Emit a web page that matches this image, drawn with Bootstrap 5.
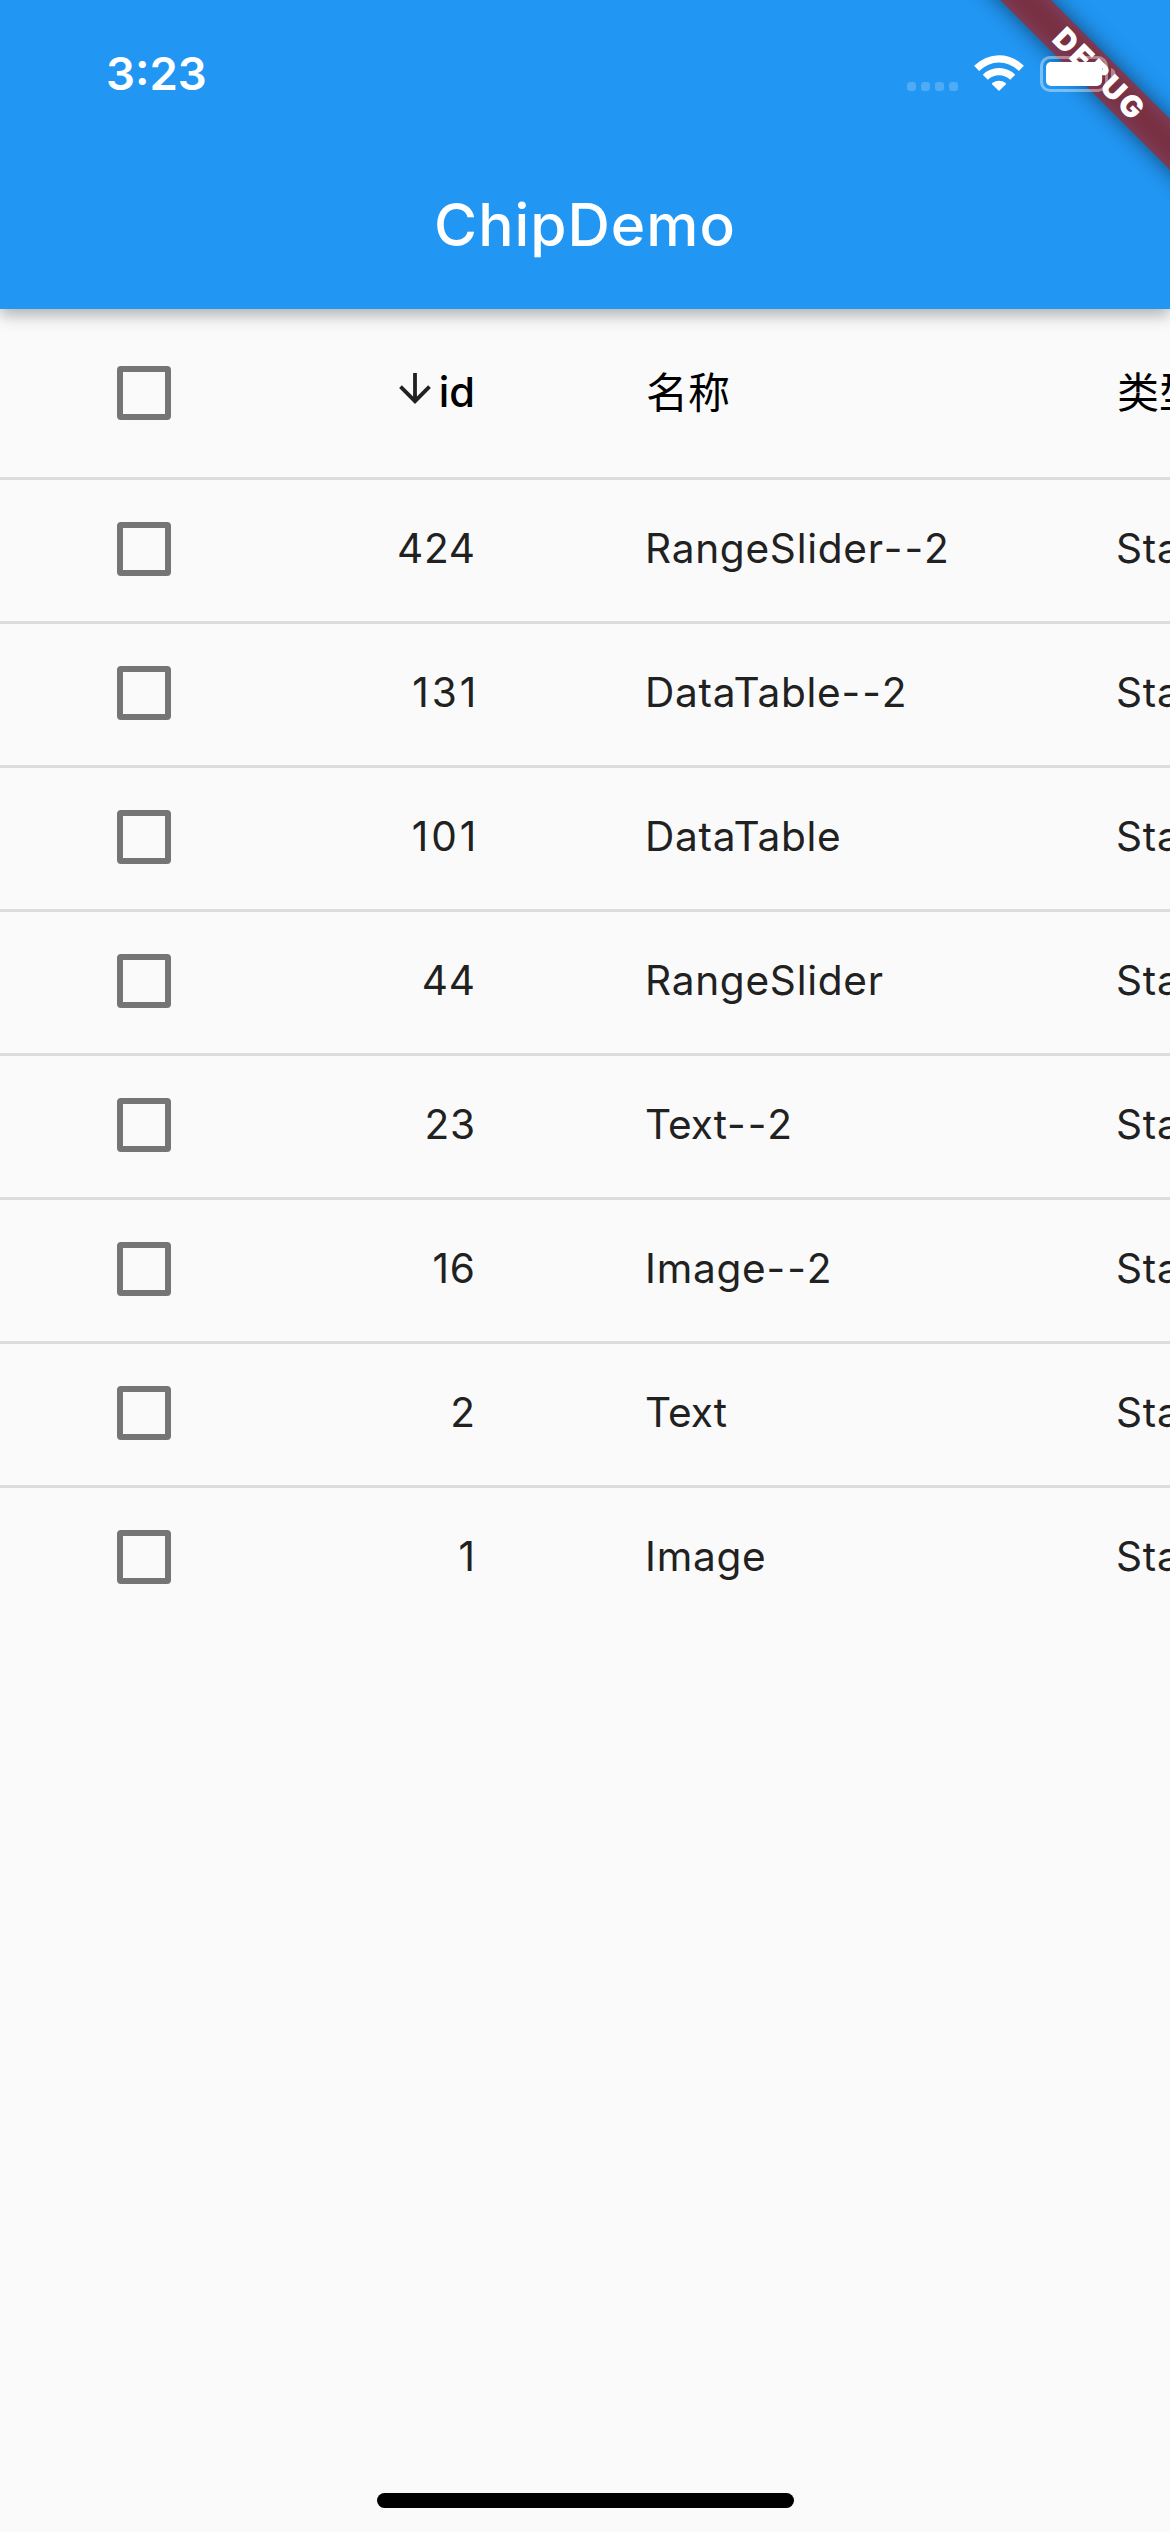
<!DOCTYPE html>
<html lang="zh-CN">
<head>
<meta charset="utf-8">
<meta name="viewport" content="width=device-width, initial-scale=1">
<title>ChipDemo</title>
<link href="https://cdn.jsdelivr.net/npm/bootstrap@5.3.0/dist/css/bootstrap.min.css" rel="stylesheet">
<style>
  body { background: #fafafa; font-family: Inter, "Noto Sans CJK SC", sans-serif; height: 2532px; overflow: hidden; color: #212121; }
  .app-top { background: #2196f3; height: 309px; box-shadow: 0 6px 15px rgba(0,0,0,.3); z-index: 2; }
  .status { height: 141px; padding: 0 54px 0 106px; }
  .clock { font-size: 45.5px; font-weight: 600; line-height: 60px; padding-top: 44px; }
  .status-icons { padding-top: 54px; height: 94px; z-index: 2; }
  .app-title { height: 168px; font-size: 58.7px; font-weight: 500; line-height: 168px; letter-spacing: 1px; }
  .ribbon { width: 230px; height: 230px; z-index: 1; }
  .ribbon text { font: 900 29.9px Inter, sans-serif; letter-spacing: 2.6px; }
  .data-grid { width: 1500px; table-layout: fixed; font-size: 40.6px; line-height: 60px; letter-spacing: .73px; }
  .data-grid td, .data-grid th { padding: 0 84px 0 87px; white-space: nowrap; font-weight: 400; vertical-align: middle; }
  .data-grid td:first-child, .data-grid th:first-child { padding: 0 0 0 117px; }
  .data-grid .num { padding: 0 82.3px 0 0; text-align: right; }
  .data-grid th { height: 168px; color: #000; font-size: 42px; letter-spacing: 0; padding-left: 88px; }
  .data-grid th.num { font-weight: 500; font-size: 41.6px; padding-bottom: 2px; padding-right: 83px; }
  .data-grid td { height: 144px; box-shadow: inset 0 3px #dcdcdc; }
  .data-grid .form-check-input { width: 54px; height: 54px; margin: 0; border: 6px solid #757575; border-radius: 4px; background-color: transparent; display: block; }
  .sort-arrow { vertical-align: 3px; margin-right: 8px; }
  .suffix { letter-spacing: 2.2px; }
  .tight { letter-spacing: 0; }
  .ones { letter-spacing: 3px; margin-right: -3.6px; }
  .home-bar { width: 417px; height: 15px; margin-bottom: 24px; }
</style>
<script src="https://cdn.jsdelivr.net/npm/bootstrap@5.3.0/dist/js/bootstrap.bundle.min.js"></script>
</head>
<body class="d-flex flex-column">
<header class="app-top position-relative text-white flex-shrink-0">
  <div class="status d-flex justify-content-between align-items-start">
    <div class="clock">3:23</div>
    <svg class="status-icons position-relative" width="210" viewBox="906 54 210 40" overflow="visible">
      <g fill="#fff">
        <g opacity=".2"><rect x="907" y="82" width="9" height="9" rx="3"/><rect x="921" y="82" width="9" height="9" rx="3"/><rect x="935" y="82" width="9" height="9" rx="3"/><rect x="949" y="82" width="9" height="9" rx="3"/></g>
        <path d="M999 91 992.3 84.4Q991.6 83.5 992.6 82.7C996.500 80 1001.500 80 1005.400 82.700Q1006.400 83.500 1005.700 84.400Z"/>
        <rect x="1046" y="62" width="56" height="24" rx="5"/>
      </g>
      <g fill="none" stroke="#fff">
        <path d="M976.600 68.400Q986.500 58.800 999 58.800T1021.400 68.400" stroke-width="7.200"/>
        <path d="M985.300 77.200Q991 71.600 999 71.600T1012.700 77.200" stroke-width="7.200"/>
        <rect x="1041.500" y="57.500" width="65" height="33" rx="8.500" stroke-width="3" opacity=".4"/>
      </g>
      <path d="M1111 68Q1115.500 69.500 1115.500 74T1111 80Z" fill="#fff" opacity=".4"/>
    </svg>
  </div>
  <h1 class="app-title m-0 text-center">ChipDemo</h1>
  <svg class="ribbon position-absolute top-0 end-0" viewBox="940 0 230 230">
    <defs><filter id="soft" x="-20%" y="-150%" width="140%" height="400%"><feGaussianBlur stdDeviation="11"/></filter></defs>
    <g transform="translate(1097.750 72.250) rotate(45)">
      <rect x="-180" y="-18" width="360" height="36" fill="#000" opacity=".5" filter="url(#soft)"/>
      <rect x="-180" y="-18" width="360" height="36" fill="#b71c1c" fill-opacity=".627"/>
      <text x="2.800" y="10.800" text-anchor="middle" fill="#fff">DEBUG</text>
    </g>
  </svg>
</header>
<main class="flex-grow-1 overflow-hidden">
  <table class="data-grid">
    <colgroup><col style="width:288px"><col style="width:270px"><col style="width:471px"><col></colgroup>
    <thead>
      <tr><th><input class="form-check-input" type="checkbox"></th><th class="num"><svg class="sort-arrow" width="32" height="31" viewBox="0 0 32 31"><path d="M16 0V28M1.500 13.700 16 28.200 30.500 13.700" fill="none" stroke="#212121" stroke-width="3.800"/></svg>id</th><th>名称</th><th>类型</th></tr>
    </thead>
    <tbody>
      <tr><td><input class="form-check-input" type="checkbox"></td><td class="num">424</td><td>RangeSlider<span class="suffix">--2</span></td><td>Stateful</td></tr>
      <tr><td><input class="form-check-input" type="checkbox"></td><td class="num"><span class="ones">131</span></td><td>DataTable<span class="suffix">--2</span></td><td>Stateful</td></tr>
      <tr><td><input class="form-check-input" type="checkbox"></td><td class="num"><span class="ones">101</span></td><td>DataTable</td><td>Stateful</td></tr>
      <tr><td><input class="form-check-input" type="checkbox"></td><td class="num">44</td><td>RangeSlider</td><td>Stateful</td></tr>
      <tr><td><input class="form-check-input" type="checkbox"></td><td class="num">23</td><td><span class="tight">Text</span><span class="suffix">--2</span></td><td>Stateful</td></tr>
      <tr><td><input class="form-check-input" type="checkbox"></td><td class="num">16</td><td>Image<span class="suffix">--2</span></td><td>Stateful</td></tr>
      <tr><td><input class="form-check-input" type="checkbox"></td><td class="num">2</td><td><span class="tight">Text</span></td><td>Stateful</td></tr>
      <tr><td><input class="form-check-input" type="checkbox"></td><td class="num">1</td><td>Image</td><td>Stateful</td></tr>
    </tbody>
  </table>
</main>
<div class="home-bar bg-black rounded-pill mx-auto flex-shrink-0"></div>
</body>
</html>
